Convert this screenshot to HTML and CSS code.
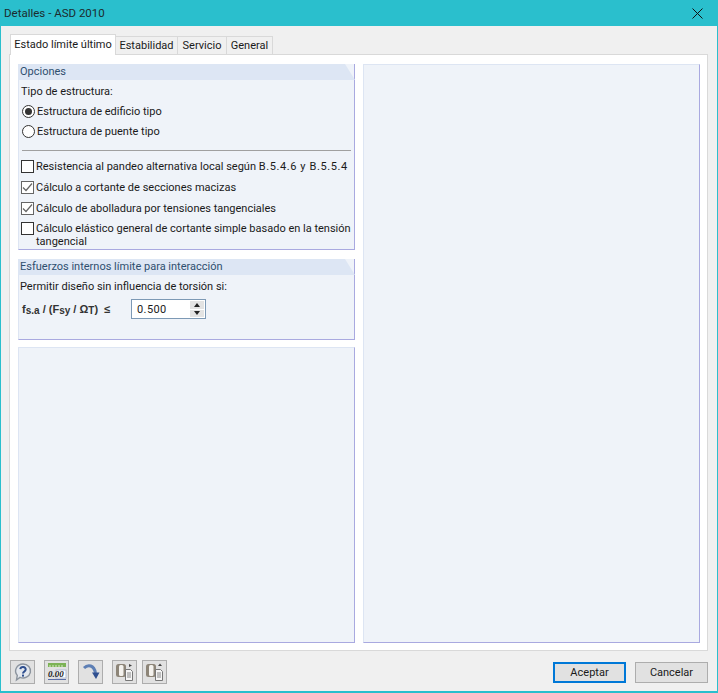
FILE: index.html
```html
<!DOCTYPE html>
<html lang="es">
<head>
  <meta charset="UTF-8" />
  <title>Detalles - ASD 2010</title>
  <link rel="stylesheet" href="styles.css">
</head>
<body>
  <div class="window">
    <div class="titlebar">
      <span class="title">Detalles - ASD 2010</span>
      <svg class="close" width="11" height="11" viewBox="0 0 11 11"><path d="M0.5 0.5L10.5 10.5M10.5 0.5L0.5 10.5" stroke="#111" fill="none"/></svg>
    </div>

    <div class="content">
      <div class="tabs">
        <div class="tab active">Estado límite último</div>
        <div class="tab">Estabilidad</div>
        <div class="tab">Servicio</div>
        <div class="tab">General</div>
      </div>

      <div class="panel">
        <div class="col">
          <div class="group group-opciones">
            <div class="group-head">Opciones</div>
            <div class="group-body">
              <div class="line-text">Tipo de estructura:</div>
              <div class="radio-row"><span class="radio on"></span>Estructura de edificio tipo</div>
              <div class="radio-row"><span class="radio"></span>Estructura de puente tipo</div>
              <div class="sep"></div>
              <div class="check-row first"><span class="check"></span><span>Resistencia al pandeo alternativa local según <span class="refs">B.5.4.6 y B.5.5.4</span></span></div>
              <div class="check-row"><span class="check checked"><svg width="11" height="11" viewBox="0 0 11 11"><path d="M1 5.5L4 8.5L10 1.5" stroke="#666" stroke-width="1.2" fill="none"/></svg></span><span>Cálculo a cortante de secciones macizas</span></div>
              <div class="check-row"><span class="check checked"><svg width="11" height="11" viewBox="0 0 11 11"><path d="M1 5.5L4 8.5L10 1.5" stroke="#666" stroke-width="1.2" fill="none"/></svg></span><span>Cálculo de abolladura por tensiones tangenciales</span></div>
              <div class="check-row"><span class="check"></span><span>Cálculo elástico general de cortante simple basado en la tensión tangencial</span></div>
            </div>
          </div>

          <div class="group group-esfuerzos">
            <div class="group-head">Esfuerzos internos límite para interacción</div>
            <div class="group-body">
              <div class="line-text">Permitir diseño sin influencia de torsión si:</div>
              <div class="formula-row">
                <div class="formula">f<sub>s.a</sub> / (F<sub>sy</sub> / Ω<sub>T</sub>) <span class="le">≤</span></div>
                <div class="spin">
                  <span class="spin-value">0.500</span>
                  <span class="spin-btns">
                    <span class="spin-btn"><i class="arrow up"></i></span>
                    <span class="spin-btn"><i class="arrow down"></i></span>
                  </span>
                </div>
              </div>
            </div>
          </div>

          <div class="group group-empty"></div>
        </div>

        <div class="col">
          <div class="group group-empty"></div>
        </div>
      </div>
    </div>

    <div class="footer">
      <div class="tools">
        <div class="tool">
          <svg width="20" height="20" viewBox="0 0 20 20"><path d="M10 2a7.5 7 0 1 1-3 13.4L3.5 18l.8-4.6A7.5 7 0 0 1 10 2z" fill="#e4e8ee" stroke="#8c949e" stroke-width="1.4"/><path d="M7.3 7.2c.4-3 5.6-2.8 5.4.3-.1 2-2.6 2-2.7 4" fill="none" stroke="#2f4f8f" stroke-width="2"/><rect x="9" y="12.6" width="2" height="2" fill="#2f4f8f"/></svg>
        </div>
        <div class="tool">
          <svg width="22" height="20" viewBox="0 0 22 20"><rect x="2" y="1" width="18" height="4" fill="#7cb255"/><path d="M4 3v2M7 3v2M10 3v2M13 3v2M16 3v2" stroke="#d8ecc8"/><rect x="10" y="8" width="10" height="8" fill="#fff" stroke="#b5bed6"/><path d="M2 17.5h18" stroke="#5a6ea8"/><text x="2" y="15" class="tool-num">0.00</text></svg>
        </div>
        <div class="tool">
          <svg width="20" height="20" viewBox="0 0 20 20"><path d="M3 6C7 2 13 3 14.5 11" fill="none" stroke="#5d7fb5" stroke-width="3"/><path d="M11 10.5h7.5L15 17z" fill="#2f4f8f"/></svg>
        </div>
        <div class="tool">
          <svg width="20" height="20" viewBox="0 0 20 20"><use href="#cyl"/><path d="M14 2l3 1.5-3 1.5z" fill="#444"/></svg>
        </div>
        <div class="tool">
          <svg width="20" height="20" viewBox="0 0 20 20">
            <defs>
              <g id="cyl">
                <rect x="1" y="2" width="10" height="13" rx="2.5" fill="#8d8578"/>
                <rect x="4" y="3" width="4.5" height="11" rx="1.5" fill="#f4f2ee"/>
                <path d="M10.5 7.5h5l2 2v9h-7z" fill="#f5f5f5" stroke="#777"/>
                <path d="M12 11h4M12 13h4M12 15h4" stroke="#888"/>
              </g>
            </defs>
            <use href="#cyl"/><path d="M15 1.5l-2 2.5h4z" fill="#444"/>
          </svg>
        </div>
      </div>
      <div class="actions">
        <div class="btn default">Aceptar</div>
        <div class="btn">Cancelar</div>
      </div>
    </div>
  </div>
</body>
</html>
```

FILE: styles.css
```css
html, body {
  margin: 0;
  padding: 0;
  height: 100%;
  overflow: hidden;
}

body {
  font-family: Roboto, "Liberation Sans", sans-serif;
  font-size: 11px;
  color: #1a1a1a;
}

.window {
  height: 693px;
  box-sizing: border-box;
  display: flex;
  flex-direction: column;
  background: #f0f0f0;
  border: 1px solid #2abfcd;
  border-top: 0;
  border-bottom-width: 2px;
}

.titlebar {
  height: 26px;
  flex-shrink: 0;
  margin: 0 -1px;
  padding: 0 15px 0 4px;
  background: #2abfcd;
  display: flex;
  align-items: center;
  justify-content: space-between;
}

.title {
  font-size: 11.5px;
  color: #1c2b2e;
}

.content {
  flex: none;
  display: flex;
  flex-direction: column;
  padding: 8px 9px 0 8px;
}

.tabs {
  display: flex;
  align-items: flex-end;
  height: 20px;
  padding-left: 1px;
  flex-shrink: 0;
}

.tab {
  height: 18px;
  line-height: 18px;
  width: 62px;
  text-align: center;
  border: 1px solid #d9d9d9;
  border-bottom: 0;
  border-left: 0;
  box-sizing: border-box;
  background: #f0f0f0;
}

.tab:nth-child(3) {
  width: 49px;
}

.tab:nth-child(4) {
  width: 46px;
}

.tab.active {
  width: 106px;
  height: 21px;
  line-height: 19px;
  background: #fff;
  border-left: 1px solid #d9d9d9;
  margin-bottom: -1px;
  position: relative;
  z-index: 1;
}

.panel {
  height: 597px;
  flex: none;
  box-sizing: border-box;
  background: #fff;
  border: 1px solid #d9d9d9;
  padding: 9px 6px 7px 8px;
  display: flex;
  gap: 8px;
}

.col {
  width: 337px;
  display: flex;
  flex-direction: column;
  gap: 8px;
}

.group {
  background: #eff3f9;
  border-right: 1px solid #a9a9e0;
  border-bottom: 1px solid #a9a9e0;
  border-left: 1px solid #dde5f3;
  box-sizing: border-box;
}

.group-opciones {
  height: 186px;
}

.group-esfuerzos {
  height: 81px;
  margin-top: 1px;
  margin-bottom: -1px;
}

.group-esfuerzos .group-body {
  padding-left: 1px;
}

.group-empty {
  flex: 1;
  border-top: 1px solid #dde5f3;
}

.group-head {
  height: 16px;
  line-height: 16px;
  background: #dde6f4;
  color: #2f4f6f;
  margin: 0 -1px 0 -1px;
  padding-left: 2px;
  clip-path: polygon(0 0, calc(100% - 10px) 0, 100% 100%, 0 100%);
}

.group-body {
  padding: 5px 2px 0 2px;
}

.line-text {
  height: 14px;
  line-height: 14px;
}

.radio-row {
  display: flex;
  align-items: center;
  height: 20px;
  margin-top: 2px;
  margin-left: 1px;
}

.radio-row + .radio-row {
  margin-top: 0;
}

.radio {
  width: 13px;
  height: 13px;
  box-sizing: border-box;
  border: 1px solid #333;
  border-radius: 50%;
  background: #fff;
  margin-right: 2px;
  flex-shrink: 0;
  position: relative;
}

.radio.on::after {
  content: "";
  position: absolute;
  left: 2px;
  top: 2px;
  width: 7px;
  height: 7px;
  border-radius: 50%;
  background: #333;
}

.sep {
  height: 1px;
  background: #a0a0a0;
  margin: 9px 1px 9px 1px;
}

.check-row {
  display: flex;
  align-items: flex-start;
  margin-top: 8px;
  line-height: 13px;
}

.check-row.first {
  margin-top: 0;
}

.check-row:last-child {
  margin-top: 7px;
}

.refs {
  letter-spacing: 0.6px;
}

.check {
  width: 13px;
  height: 13px;
  box-sizing: border-box;
  border: 1px solid #333;
  background: #fff;
  margin-right: 2px;
  flex-shrink: 0;
  display: flex;
  align-items: center;
  justify-content: center;
}

.check.checked {
  border-color: #666;
}

.formula-row {
  display: flex;
  align-items: center;
  margin-top: 5px;
}

.formula {
  width: 111px;
  padding-left: 2px;
  box-sizing: border-box;
  font-family: "Liberation Sans", sans-serif;
  font-weight: bold;
  font-size: 11px;
  color: #333;
}

.formula sub {
  font-size: 10px;
  line-height: 0;
  vertical-align: -1px;
}

.le {
  margin-left: 3px;
}

.spin {
  width: 75px;
  height: 20px;
  box-sizing: border-box;
  border: 1px solid #7d99b5;
  background: #fff;
  display: flex;
  align-items: center;
  justify-content: space-between;
  padding: 1px 1px 1px 5px;
}

.spin-value {
  letter-spacing: 0.4px;
}

.spin-btns {
  width: 14px;
  height: 100%;
  display: flex;
  flex-direction: column;
  gap: 1px;
}

.spin-btn {
  flex: 1;
  background: #e3e3e3;
  display: flex;
  align-items: center;
  justify-content: center;
}

.arrow {
  width: 0;
  height: 0;
  border-left: 3px solid transparent;
  border-right: 3px solid transparent;
}

.arrow.up {
  border-bottom: 4px solid #222;
}

.arrow.down {
  border-top: 4px solid #222;
}

.footer {
  flex: 1;
  display: flex;
  justify-content: space-between;
  align-items: center;
  padding: 2px 9px 0 9px;
}

.tools {
  display: flex;
  gap: 9px;
}

.tool {
  width: 25px;
  height: 24px;
  box-sizing: border-box;
  border: 1px solid #adadad;
  background: #e1e1e1;
  display: flex;
  align-items: center;
  justify-content: center;
}

.tool:nth-child(5) {
  margin-left: -4px;
}

.tool-num {
  font-family: "Liberation Serif", serif;
  font-style: italic;
  font-weight: bold;
  font-size: 9px;
  fill: #222;
}

.actions {
  display: flex;
  gap: 9px;
}

.btn {
  width: 73px;
  height: 21px;
  line-height: 19px;
  box-sizing: border-box;
  text-align: center;
  border: 1px solid #adadad;
  background: #e1e1e1;
}

.btn.default {
  border: 2px solid #0078d7;
  line-height: 17px;
}
```
